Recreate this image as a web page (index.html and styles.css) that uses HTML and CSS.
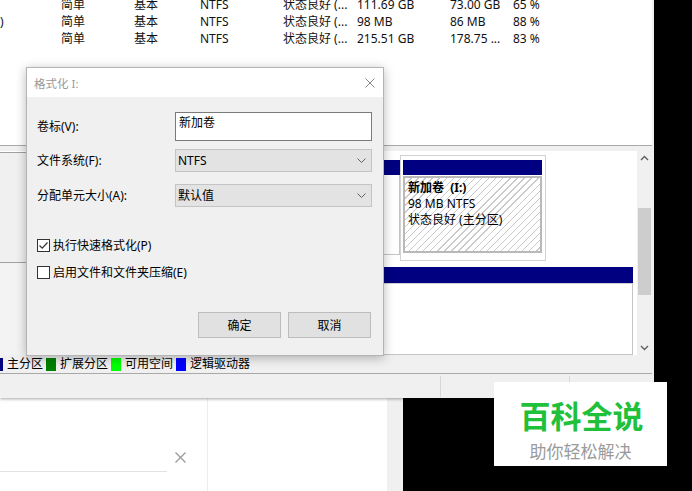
FILE: index.html
```html
<!DOCTYPE html>
<html lang="zh-CN">
<head>
<meta charset="utf-8">
<title>磁盘管理 - 格式化</title>
<link rel="stylesheet" href="styles.css">
</head>
<body>
<div class="screen">
  <div class="mmc">
    <div class="list">
      <div class="rows">
        <div class="row"><span></span><span>简单</span><span>基本</span><span>NTFS</span><span>状态良好 (...</span><span>111.69 GB</span><span>73.00 GB</span><span>65 %</span></div>
        <div class="row"><span>)</span><span>简单</span><span>基本</span><span>NTFS</span><span>状态良好 (...</span><span>98 MB</span><span>86 MB</span><span>88 %</span></div>
        <div class="row"><span></span><span>简单</span><span>基本</span><span>NTFS</span><span>状态良好 (...</span><span>215.51 GB</span><span>178.75 ...</span><span>83 %</span></div>
      </div>
    </div>
    <div class="splitter"></div>
    <div class="graph">
      <div class="graph-main">
        <div class="disk disk1">
          <div class="disk-label"></div>
          <div class="part part-a"><div class="bar"></div><div class="part-body"></div></div>
          <div class="part-frame">
            <div class="bar"></div>
            <div class="part-body hatched">
              <div class="vol-name">新加卷&nbsp; (I:)</div>
              <div>98 MB NTFS</div>
              <div>状态良好 (主分区)</div>
            </div>
          </div>
          <div class="disk-spacer"></div>
        </div>
        <div class="disk disk2">
          <div class="disk-label plain"></div>
          <div class="part part-c"><div class="bar"></div><div class="part-body"></div></div>
        </div>
      </div>
      <div class="vscroll">
        <div class="sb-btn up"><svg width="9" height="6" viewBox="0 0 9 6"><path d="M1 5 L4.5 1.5 L8 5" fill="none" stroke="#606060" stroke-width="1.4"/></svg></div>
        <div class="sb-track"><div class="sb-thumb"></div></div>
        <div class="sb-btn down"><svg width="9" height="6" viewBox="0 0 9 6"><path d="M1 1 L4.5 4.5 L8 1" fill="none" stroke="#606060" stroke-width="1.4"/></svg></div>
      </div>
    </div>
    <div class="legend">
      <span class="sq sq-primary first"></span><span class="lg-text">主分区</span>
      <span class="sq sq-extended"></span><span class="lg-text">扩展分区</span>
      <span class="sq sq-free"></span><span class="lg-text">可用空间</span>
      <span class="sq sq-logical"></span><span class="lg-text">逻辑驱动器</span>
    </div>
    <div class="statusbar">
      <div class="sb-panel p1"></div>
      <div class="sb-panel p2"></div>
      <div class="sb-panel p3"></div>
    </div>
  </div>

  <div class="lower">
    <div class="lower-left">
      <div class="search-row">
        <div class="search-line"></div>
        <svg class="search-x" width="11" height="11" viewBox="0 0 11 11"><path d="M0.5 0.5 L10.5 10.5 M10.5 0.5 L0.5 10.5" stroke="#9a9a9a" stroke-width="1.3"/></svg>
      </div>
    </div>
    <div class="lower-right"></div>
    <div class="lower-strip"></div>
  </div>

  <div class="dialog">
    <div class="dlg-title">
      <span class="dlg-caption">格式化 I:</span>
      <svg class="dlg-close" width="10" height="10" viewBox="0 0 10 10"><path d="M0.5 0.5 L9.5 9.5 M9.5 0.5 L0.5 9.5" stroke="#8a8a8a" stroke-width="1"/></svg>
    </div>
    <div class="dlg-body">
      <div class="field f1">
        <span class="field-label">卷标(V):</span>
        <div class="textbox">新加卷</div>
      </div>
      <div class="field f2">
        <span class="field-label">文件系统(F):</span>
        <div class="combo"><span>NTFS</span><svg width="9" height="5" viewBox="0 0 9 5"><path d="M0.5 0.5 L4.5 4.5 L8.5 0.5" fill="none" stroke="#606060" stroke-width="1"/></svg></div>
      </div>
      <div class="field f3">
        <span class="field-label">分配单元大小(A):</span>
        <div class="combo"><span>默认值</span><svg width="9" height="5" viewBox="0 0 9 5"><path d="M0.5 0.5 L4.5 4.5 L8.5 0.5" fill="none" stroke="#606060" stroke-width="1"/></svg></div>
      </div>
      <div class="check c1">
        <span class="box"><svg width="11" height="11" viewBox="0 0 11 11"><path d="M1.5 5.5 L4.2 8.2 L9.5 2.5" fill="none" stroke="#333" stroke-width="1.2"/></svg></span>
        <span>执行快速格式化(P)</span>
      </div>
      <div class="check c2">
        <span class="box"></span>
        <span>启用文件和文件夹压缩(E)</span>
      </div>
      <div class="buttons">
        <div class="btn">确定</div>
        <div class="btn">取消</div>
      </div>
    </div>
  </div>

  <div class="logo">
    <div class="logo-title">百科全说</div>
    <div class="logo-sub">助你轻松解决</div>
  </div>
</div>
</body>
</html>
```

FILE: styles.css
```css
* { box-sizing: border-box; }

html, body {
  margin: 0;
  padding: 0;
  background: #000;
}

body {
  font-family: "Noto Sans", "Noto Sans CJK SC", sans-serif;
  font-size: 12px;
  color: #000;
}

.screen {
  position: relative;
  width: 692px;
  height: 491px;
  overflow: hidden;
  background: #000;
}

/* ---------- main MMC window ---------- */
.mmc {
  position: relative;
  z-index: 1;
  width: 654px;
  height: 398px;
  background: #f0f0f0;
  display: flex;
  flex-direction: column;
  box-shadow: 0 1px 3px rgba(0, 0, 0, 0.35);
}

.list {
  width: 652px;
  height: 146px;
  background: #fff;
  border-bottom: 1px solid #a9a9a9;
  overflow: hidden;
}

.rows { margin-top: -4px; }

.row {
  display: grid;
  grid-template-columns: 61px 73px 66px 83px 74px 93px 63px 1fr;
  height: 17px;
  line-height: 17px;
  white-space: nowrap;
  color: #111;
}

.row span { overflow: hidden; }

.splitter {
  height: 5px;
  width: 652px;
  background: #f0f0f0;
}

.graph {
  height: 204px;
  width: 652px;
  display: flex;
}

.graph-main {
  flex: 1;
  background: #fff;
  padding-top: 1px;
  display: flex;
  flex-direction: column;
}

.disk {
  display: flex;
}

.disk1 { height: 111px; }
.disk2 { flex: 1; }

.disk-label {
  width: 120px;
  background: #f0f0f0;
  border-top: 1px solid #a0a0a0;
  border-bottom: 1px solid #a0a0a0;
}

.disk-label.plain {
  border: none;
  background: #f3f3f3;
}

.bar {
  height: 15px;
  background: #000080;
}

.part {
  display: flex;
  flex-direction: column;
}

.part-a {
  flex: 1;
  margin: 8px 0 0 2px;
  height: 95px;
}

.part-body {
  flex: 1;
  background: #fff;
  border: 1px solid #c4c4c4;
  border-top: none;
}

.part-frame {
  width: 146px;
  margin-top: 3px;
  height: 106px;
  border: 1px solid #d2d2d2;
  padding: 4px 3px 7px 2px;
  background: #fff;
  display: flex;
  flex-direction: column;
}

.part-frame .part-body.hatched {
  flex: none;
  height: 77px;
  margin-top: 1px;
  border: 2px solid #b9b9b9;
  padding: 2px 0 0 3px;
  line-height: 16px;
  white-space: nowrap;
  overflow: hidden;
  background: repeating-linear-gradient(135deg, #ffffff 0 4px, #c9c9c9 4px 5px);
}

.vol-name { font-weight: 700; }

.disk-spacer { width: 91px; }

.part-c {
  flex: 1;
  margin: 4px 4px 0 2px;
}

.part-c .bar { height: 16px; }

.part-c .part-body { border-top: 1px solid #d0d0d0; }

/* scrollbar */
.vscroll {
  width: 15px;
  background: #f0f0f0;
  display: flex;
  flex-direction: column;
}

.sb-btn {
  display: flex;
  align-items: center;
  justify-content: center;
}

.sb-btn.up { height: 12px; padding-top: 1px; }
.sb-btn.down { height: 14px; }

.sb-track {
  flex: 1;
  padding: 45px 1px 0 1px;
}

.sb-thumb {
  height: 87px;
  background: #cdcdcd;
}

/* legend */
.legend {
  height: 19px;
  width: 652px;
  border-bottom: 1px solid #a9a9a9;
  display: flex;
  align-items: center;
  line-height: 18px;
  white-space: nowrap;
  overflow: hidden;
}

.sq {
  display: inline-block;
  width: 10px;
  height: 13px;
  margin-right: 4px;
  flex: none;
}

.sq.first { margin-left: -7px; }
.sq-primary { background: #000080; }
.sq-extended { background: #008000; }
.sq-free { background: #00ff00; }
.sq-logical { background: #0000ff; }

.lg-text { margin-right: 3px; }

/* status bar */
.statusbar {
  height: 24px;
  display: flex;
  padding-top: 2px;
}

.sb-panel { height: 21px; }
.p1 { width: 441px; border-right: 1px solid #d7d7d7; }
.p2 { width: 129px; border-right: 1px solid #d7d7d7; }
.p3 { flex: 1; }

/* ---------- lower window ---------- */
.lower {
  width: 403px;
  height: 93px;
  display: flex;
  background: #fff;
}

.lower-left {
  width: 208px;
  border-right: 1px solid #ececec;
  padding-top: 53px;
}

.search-row {
  display: flex;
  align-items: flex-start;
}

.search-line {
  width: 167px;
  height: 21px;
  border-bottom: 1px solid #e2e2e2;
}

.search-x {
  margin: 1px 0 0 8px;
}

.lower-right { width: 179px; }

.lower-strip {
  width: 16px;
  background: #f0f0f0;
}

/* ---------- format dialog ---------- */
.dialog {
  position: absolute;
  z-index: 3;
  left: 26px;
  top: 67px;
  width: 358px;
  height: 289px;
  border: 1px solid #b4b4b4;
  background: #f0f0f0;
  box-shadow: 0 2px 10px rgba(0, 0, 0, 0.28);
  display: flex;
  flex-direction: column;
}

.dlg-title {
  height: 29px;
  background: #fff;
  display: flex;
  align-items: center;
  justify-content: space-between;
  padding: 0 8px 0 7px;
}

.dlg-caption {
  color: #9a9a9a;
  font-size: 11.5px;
}

.dlg-body {
  flex: 1;
  padding: 15px 11px 0 10px;
}

.field {
  display: grid;
  grid-template-columns: 138px 197px;
  align-items: center;
}

.f2 { margin-top: 8px; }
.f3 { margin-top: 12px; }

.field-label { line-height: 16px; }

.textbox {
  height: 29px;
  background: #fff;
  border: 1px solid #7a7a7a;
  padding: 2px 0 0 3px;
  line-height: 16px;
}

.combo {
  height: 23px;
  background: #e3e3e3;
  border: 1px solid #c4c4c4;
  display: flex;
  align-items: center;
  justify-content: space-between;
  padding: 0 5px 0 2px;
  line-height: 16px;
}

.check {
  display: flex;
  align-items: center;
  height: 17px;
  line-height: 17px;
}

.c1 { margin-top: 30px; }
.c2 { margin-top: 10px; }

.box {
  width: 13px;
  height: 13px;
  border: 1px solid #333;
  background: #fff;
  margin-right: 3px;
  display: flex;
  align-items: center;
  justify-content: center;
}

.buttons {
  margin-top: 31px;
  display: flex;
  justify-content: flex-end;
  gap: 7px;
  padding-right: 1px;
}

.btn {
  width: 83px;
  height: 26px;
  background: #e1e1e1;
  border: 1px solid #bdbdbd;
  display: flex;
  align-items: center;
  justify-content: center;
}

/* ---------- watermark logo ---------- */
.logo {
  position: absolute;
  z-index: 4;
  left: 494px;
  top: 382px;
  width: 173px;
  height: 84px;
  background: #fff;
  text-align: center;
  padding-top: 17px;
  font-family: "Noto Sans CJK SC", sans-serif;
}

.logo-title {
  font-size: 31px;
  line-height: 31px;
  font-weight: 700;
  color: #1fc03a;
  padding-left: 2px;
}

.logo-sub {
  margin-top: 12px;
  font-size: 17px;
  line-height: 17px;
  color: #9a9a9a;
}
```
